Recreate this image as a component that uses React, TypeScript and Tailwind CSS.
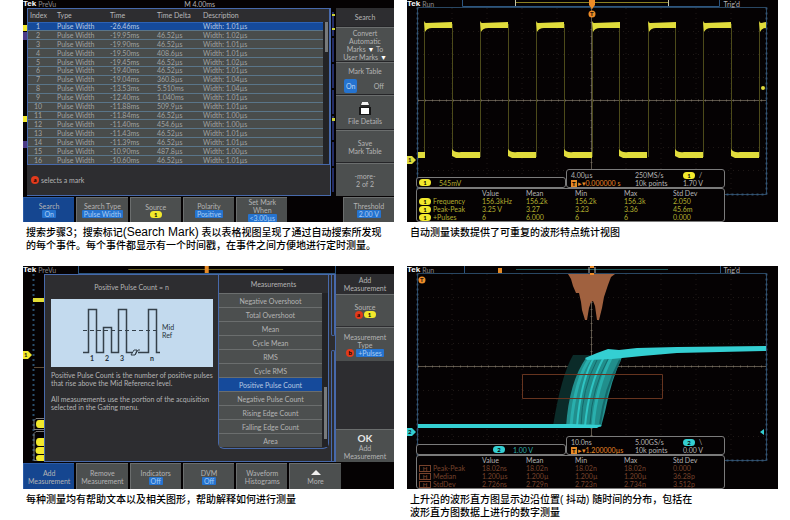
import { ReactNode } from 'react'
import { clsx } from 'clsx'

const marks = [
  ['1', '-26.46ms', '', '1.01µs'],
  ['2', '-19.95ms', '46.52µs', '1.02µs'],
  ['3', '-19.90ms', '46.52µs', '1.01µs'],
  ['4', '-19.50ms', '408.6µs', '1.01µs'],
  ['5', '-19.45ms', '46.52µs', '1.02µs'],
  ['6', '-19.40ms', '46.52µs', '1.01µs'],
  ['7', '-19.04ms', '360.8µs', '1.04µs'],
  ['8', '-13.53ms', '5.510ms', '1.04µs'],
  ['9', '-12.40ms', '1.040ms', '1.01µs'],
  ['10', '-11.88ms', '509.9µs', '1.01µs'],
  ['11', '-11.84ms', '46.52µs', '1.00µs'],
  ['12', '-11.40ms', '454.6µs', '1.00µs'],
  ['13', '-11.43ms', '46.52µs', '1.01µs'],
  ['14', '-11.39ms', '46.52µs', '1.01µs'],
  ['15', '-10.90ms', '487.8µs', '1.00µs'],
  ['16', '-10.60ms', '46.52µs', '1.01µs'],
]

const measurements = [
  'Negative Overshoot',
  'Total Overshoot',
  'Mean',
  'Cycle Mean',
  'RMS',
  'Cycle RMS',
  'Positive Pulse Count',
  'Negative Pulse Count',
  'Rising Edge Count',
  'Falling Edge Count',
  'Area',
]

const pulseStats = [
  ['Frequency', '156.3kHz', '156.2k', '156.2k', '156.3k', '2.050'],
  ['Peak-Peak', '3.25 V', '3.27', '3.23', '3.36', '45.6m'],
  ['+Pulses', '6', '6.000', '6', '6', '0.000'],
]

const jitterStats = [
  ['Peak-Peak', '18.02ns', '18.02n', '18.02n', '18.02n', '0.000'],
  ['Median', '1.200µs', '1.200µ', '1.200µ', '1.200µ', '36.28p'],
  ['StdDev', '2.726ns', '2.729n', '2.723n', '2.734n', '3.512p'],
]

function Figure({ caption, children }: { caption: ReactNode; children: ReactNode }) {
  return (
    <figure className="flex flex-col">
      {children}
      <figcaption className="px-[3px] pt-1 font-['Liberation_Sans','Noto_Sans_CJK_SC',sans-serif] text-[10px] leading-[13px] font-medium whitespace-nowrap text-black">
        {caption}
      </figcaption>
    </figure>
  )
}

function Screen({ className, children }: { className: string; children: ReactNode }) {
  return (
    <div className={clsx("overflow-hidden bg-[#050203] font-['Lato',sans-serif] text-[7px] leading-[8px] text-[#b4b4b4]", className)}>
      {children}
    </div>
  )
}

function Brand({ status }: { status: string }) {
  return (
    <span className="flex items-center gap-0.5 whitespace-nowrap">
      <b className="font-['Liberation_Sans',sans-serif] text-[8px] leading-[8px] text-white">Tek</b>
      <span className="text-[#8a8a8a]">{status}</span>
    </span>
  )
}

function Channel({ children, className }: { children: ReactNode; className: string }) {
  return (
    <span className={clsx('inline-block h-[7px] w-3 rounded-full text-center text-[6px] leading-[7px] font-bold text-black', className)}>
      {children}
    </span>
  )
}

function Knob({ children }: { children: ReactNode }) {
  return (
    <span className="inline-block size-2 rounded-full bg-[#e23a1c] text-center text-[6px] leading-[8px] font-bold text-black">
      {children}
    </span>
  )
}

function Value({ children }: { children: ReactNode }) {
  return <span className="rounded-[1px] bg-[#2573cf] px-0.5 leading-[8px] text-[#a9cdf5]">{children}</span>
}

function MenuButton({ active, children }: { active?: boolean; children: ReactNode }) {
  return (
    <button
      type="button"
      className={clsx(
        'flex h-full min-w-0 flex-col items-center justify-center border-t border-l whitespace-nowrap',
        active ? 'border-[#2d5ca5] bg-[#154690]' : 'border-[#6b6e6e] bg-[#4c4f4f]',
      )}
    >
      {children}
    </button>
  )
}

function SideButton({ className, children }: { className: string; children: ReactNode }) {
  return (
    <button
      type="button"
      className={clsx('flex w-full flex-col items-center justify-center border-t border-[#6b6e6e] bg-[#4c4f4f] whitespace-nowrap', className)}
    >
      {children}
    </button>
  )
}

function SearchScreen() {
  return (
    <Screen className="flex h-[222px] flex-col">
      <div className="flex h-[8px] items-center">
        <Brand status="PreVu" />
        <span className="ml-[128px]">M 4.00ms</span>
      </div>
      <div className="flex h-[188px]">
        <svg className="w-1 shrink-0" viewBox="0 0 4 188" preserveAspectRatio="none">
          <path d="M0 17h4v6H0zM0 108h4v6H0z" fill="#f2e92c" />
          <path d="M0 24h4v8H0zM0 133h4v7H0z" fill="#4b3a86" />
        </svg>
        <div className="flex min-w-0 flex-1 flex-col border-r border-b border-[#4769ab] bg-[#2d2d30]">
          <div className="flex h-[157px] border border-[#4769ab]">
            <table className="h-full flex-1 table-fixed border-collapse text-left text-[#a0a2a2]">
              <thead>
                <tr className="h-[13px] text-[#b9b9b9]">
                  <th className="w-[29px] p-0 pl-0.5 font-normal">Index</th>
                  <th className="w-[53px] p-0 font-normal">Type</th>
                  <th className="w-[47px] p-0 font-normal">Time</th>
                  <th className="w-[46px] p-0 font-normal">Time Delta</th>
                  <th className="p-0 font-normal">Description</th>
                </tr>
              </thead>
              <tbody className="leading-[7px]">
                {marks.map(([index, time, delta, width], i) => (
                  <tr key={index} className={clsx('border-t', i === 0 ? 'border-[#2d62b4] bg-[#154a9b] text-[#b7c9e2]' : 'border-[#5a7589] bg-[#494c4b]')}>
                    <td className="p-0 pr-[9px] text-center">{index}</td>
                    <td className="p-0">Pulse Width</td>
                    <td className="p-0">{time}</td>
                    <td className="p-0">{delta}</td>
                    <td className="p-0">Width: {width}</td>
                  </tr>
                ))}
              </tbody>
            </table>
            <div className="mt-[13px] w-[6px] bg-[#232326] pl-0.5">
              <div className="h-[30px] w-[3px] bg-[#777a7c]" />
            </div>
          </div>
          <p className="flex flex-1 items-center gap-0.5 pl-1">
            <Knob>a</Knob>
            selects a mark
          </p>
        </div>
        <svg className="w-[5px] shrink-0" viewBox="0 0 5 188" preserveAspectRatio="none">
          <path d="M2 4v180" stroke="#242d68" strokeWidth="2" strokeDasharray="24 2" />
          <path d="M1 6h3v2H1zM1 20h3v2H1zM1 110h3v3H1z" fill="#c9cf37" />
        </svg>
        <aside className="flex w-[58px] shrink-0 flex-col gap-px bg-[#252528]">
          <h2 className="flex h-[18px] items-center justify-center bg-[#2d2d30]">Search</h2>
          <SideButton className="h-[34px]">
            <span>Convert</span>
            <span>Automatic</span>
            <span>Marks <b className="text-white">▼</b> To</span>
            <span>User Marks <b className="text-white">▼</b></span>
          </SideButton>
          <div className="flex h-[32px] flex-col items-center justify-between border-t border-[#6b6e6e] bg-[#4c4f4f] pt-1 pb-px">
            <span>Mark Table</span>
            <div className="flex w-full justify-between px-2">
              <button type="button" className="h-[14px] rounded-[2px] bg-[#2573cf] px-0.5 text-[#b9d6f5]">On</button>
              <button type="button" className="pr-0.5">Off</button>
            </div>
          </div>
          <SideButton className="h-[34px]">
            <svg className="mb-0.5 h-[14px] w-3" viewBox="0 0 12 14">
              <path d="M2 1h8l1 5H1z" fill="#2a2a2a" />
              <path d="M3 1h6l1 3H2z" fill="#f2f2f2" />
              <path d="M0 6h12v8H0z" fill="#171717" />
              <path d="M2 7h8v6H2z" fill="#fff" />
            </svg>
            <span>File Details</span>
          </SideButton>
          <SideButton className="h-[32px]">
            <span>Save</span>
            <span>Mark Table</span>
          </SideButton>
          <SideButton className="h-[33px]">
            <span>-more-</span>
            <span>2 of 2</span>
          </SideButton>
        </aside>
      </div>
      <div className="mt-px grid flex-1 grid-cols-7 gap-x-0.5">
        <MenuButton active>
          Search<Value>On</Value>
        </MenuButton>
        <MenuButton>
          Search Type<Value>Pulse Width</Value>
        </MenuButton>
        <MenuButton>
          Source<Channel className="bg-[#f2e92c]">1</Channel>
        </MenuButton>
        <MenuButton>
          Polarity<Value>Positive</Value>
        </MenuButton>
        <MenuButton>
          <span>Set Mark</span>
          <span>When</span>
          <Value>&lt;3.00µs</Value>
        </MenuButton>
        <span />
        <MenuButton>
          Threshold<Value>2.00 V</Value>
        </MenuButton>
      </div>
    </Screen>
  )
}

function Graticule() {
  return (
    <>
      <g stroke="#3a302c" strokeDasharray="1 4" opacity=".5">
        {[45, 80, 115, 150, 219, 254, 289, 324].map((x) => (
          <path key={x} d={`M${x} 8V194`} />
        ))}
        {[31, 54, 77, 124, 147, 170].map((y) => (
          <path key={y} d={`M11 ${y}.5H359`} />
        ))}
      </g>
      <path d="M11 100.5H359M184.5 8V194" stroke="#5d554a" />
      <path d="M11 100.5H359M184.5 8V194" stroke="#7d7466" strokeWidth="2" strokeDasharray="1 6" opacity=".7" />
      <path d="M10.5 7.5H359.5V194.5H10.5z" fill="none" stroke="#294763" />
      <path d="M10.5 7.5V194.5M359.5 7.5V194.5H10.5" fill="none" stroke="#3a5b7a" strokeWidth="2" strokeDasharray="2 3" opacity=".8" />
    </>
  )
}

function PulseTrace() {
  const rises = [17, 73, 129, 185, 241, 296, 352]
  const lows = [45, 101, 157, 212, 268, 324]

  return (
    <svg className="col-start-1 row-start-1 w-full" viewBox="0 0 371 222">
      <path d="M55.5 0V6.500H312.500V0" fill="none" stroke="#2c5680" />
      <path d="M108 2.500H262" stroke="#8c8123" />
      <path d="M108.500 0V6M261.500 0V6" stroke="#c6c6a6" />
      <Graticule />
      <g stroke="#4c4a1a">
        {rises.map((x) => <path key={x} d={`M${x}.500 21V157`} />)}
        {lows.map((x) => <path key={x} d={`M${x}.500 24V152`} />)}
      </g>
      <g fill="#e0dc3c">
        {rises.map((x) => {
          const end = Math.min(x + 28, 359)
          return <path key={x} d={`M${x} 22 L${x + 2} 23 L${end} 22 V28 L${Math.min(x + 8, end)} 28 Q${x + 3} 28 ${x + 1} 32z`} />
        })}
        {lows.map((x) => (
          <path key={x} d={`M${x} 149 Q${x + 3} 153 ${x + 9} 152 H${x + 28} V158 H${x + 4} L${x} 156z`} />
        ))}
        <path d="M11 152h7v6h-7z" />
        <circle cx="356" cy="88" r="2" />
        <path d="M0 156H5L9 160L5 164H0z" />
      </g>
      <text x="1" y="162" fontSize="6" fontWeight="700" fill="#111">1</text>
      <path d="M182 0h6v5l-3 4-3-4z" fill="#ee8c27" />
      <circle cx="185" cy="14" r="3.500" fill="#ee8c27" />
      <text x="183" y="16" fontSize="6" fontWeight="700" fill="#25140a">T</text>
    </svg>
  )
}

function JitterTrace() {
  return (
    <svg className="col-start-1 row-start-1 w-full" viewBox="0 0 371 222">
      <path d="M57.500 0V7.500H313.500V0" fill="none" stroke="#2c5680" />
      <path d="M109 3.500H261" stroke="#1e5a5b" />
      <path d="M91 2h4v5h-4z" fill="#e58a26" />
      <Graticule />
      <path d="M161 8 L164 13 L166 20 L169 27 H172 L174 36 L175 44 L178 54 H180 L182 42 L184 36 L186 35 L188 40 L190 54 H192 L195 42 L197 31 L201 19 L204 11 L208 8z" fill="#a0613f" />
      <path d="M182 1v6M188 1v6" stroke="#b4b4b4" />
      <path d="M183 1h4M183 8h4" stroke="#ee8c27" strokeWidth="2" />
      <path d="M166 89 H182 L200 94 L178 160 H146 Q154 110 166 89z" fill="#0b2b29" />
      <path d="M179 92 L190 89 H216 Q204 114 198 146 L194 161 H159 Q162 116 179 92z" fill="#218e8c" />
      <g fill="none" stroke="#2fc4c3">
        <path d="M184 91Q168 112 164 160" strokeWidth="3" opacity=".6" />
        <path d="M188 90Q174 112 170 160" strokeWidth="2" />
        <path d="M197 91Q182 118 178 160" strokeWidth="2" />
        <path d="M204 92Q189 122 186 160" strokeWidth="3" opacity=".6" />
      </g>
      <g fill="none" stroke="#14696a">
        <path d="M190 94Q175 122 174 160" />
        <path d="M201 93Q185 122 183 158" />
        <path d="M213 94Q198 122 193 158" strokeWidth="2" />
      </g>
      <path d="M178 92 L190 87 L201 83 L212 84 L230 82 L270 81 L359 80 V85 L270 87 L235 90 L205 93 L180 94z" fill="#34cfd2" />
      <path d="M11 158H165L195 159L190 162H11z" fill="#34cfd2" />
      <path d="M115.500 108.500h140v24h-140z" fill="none" stroke="#66341f" />
      <circle cx="15" cy="14" r="3.500" fill="#ee8c27" />
      <text x="13" y="16" fontSize="6" fontWeight="700" fill="#25140a">T</text>
      <path d="M0 162H5L9 166L5 170H0zM353 166l4-3v6z" fill="#34cfd2" />
      <text x="1" y="168" fontSize="6" fontWeight="700" fill="#111">2</text>
    </svg>
  )
}

type ReadoutsProps = {
  channel: string
  scale: string
  stats: string[][]
  timebase: string
  rate: string
  delay: string
  level: string
  histogram?: boolean
}

function Readouts({ channel, scale, stats, timebase, rate, delay, level, histogram }: ReadoutsProps) {
  const badge = histogram ? 'bg-[#34cfd2]' : 'bg-[#f2e92c]'

  return (
    <div className="z-10 col-start-1 row-start-1 mr-[53px] ml-[9px] self-end">
      <div className="flex items-end">
        <div
          className={clsx(
            'flex h-[11px] flex-1 items-center gap-2 rounded-[3px] border border-[#7b7b7b] bg-[#050203]',
            histogram ? 'pl-[76px] text-[#2aa7a8]' : 'pl-0.5 text-[#b3af2f]',
          )}
        >
          <Channel className={badge}>{channel}</Channel>
          {scale}
        </div>
        <dl className="grid h-[19px] w-[159px] grid-cols-[64px_48px_1fr] rounded-[3px] border border-[#7b7b7b] bg-[#050203] pt-px pl-1 whitespace-nowrap">
          <dt>{timebase}</dt>
          <dt>{rate}</dt>
          <dt className="flex items-center gap-1">
            <Channel className={badge}>{channel}</Channel>
            {histogram ? '\\' : '/'}
          </dt>
          <dd className="text-[#e58a26]">
            <b className="mr-px bg-[#e58a26] px-px text-[6px] text-black">T</b>
            ▸▾{delay}
          </dd>
          <dd>10k points</dd>
          <dd>{level}</dd>
        </dl>
      </div>
      <div className="rounded-[3px] border border-[#7b7b7b] bg-[#050203]">
        <table className={clsx('w-full table-fixed border-collapse text-left', histogram ? 'text-[#77422c]' : 'text-[#b3af2f]')}>
          <thead>
            <tr className="text-[#b4b4b4]">
              <td className="w-[65px] p-0" />
              <th className="w-[44px] p-0 font-normal">Value</th>
              <th className="w-[49px] p-0 font-normal">Mean</th>
              <th className="w-[49px] p-0 font-normal">Min</th>
              <th className="w-[49px] p-0 font-normal">Max</th>
              <th className="p-0 font-normal">Std Dev</th>
            </tr>
          </thead>
          <tbody>
            {stats.map(([name, ...values]) => (
              <tr key={name}>
                <th className="p-0 font-normal whitespace-nowrap">
                  <span className="flex h-2 items-center gap-0.5 pl-0.5">
                    {histogram ? (
                      <span className="h-[7px] w-3 border border-current text-center text-[6px] leading-[5px] font-bold">H</span>
                    ) : (
                      <Channel className={badge}>{channel}</Channel>
                    )}
                    {name}
                  </span>
                </th>
                {values.map((value, i) => (
                  <td key={i} className="p-0">{value}</td>
                ))}
              </tr>
            ))}
          </tbody>
        </table>
      </div>
    </div>
  )
}

function ScopeHeader() {
  return (
    <div className="z-10 col-start-1 row-start-1 flex h-[8px] items-center justify-between self-start pr-[38px]">
      <Brand status="Run" />
      <span>Trig'd</span>
    </div>
  )
}

function PulseCountDrawing() {
  return (
    <svg className="h-[68px] w-[162px] bg-[#c3daee]" viewBox="0 0 162 68">
      <g fill="none" stroke="#34404a">
        <path d="M32 53.500H37.500V10.500H45.500V53.500H52.500V28.500H60.500V53.500H67.500V10.500H75.500V53.500H81M87 53.500H97.500V10.500H105.500V53.500H109" strokeWidth="1.500" />
        <path d="M80 56l3-5h3l-2 5zM84 56l3-5h2" />
        <path d="M32 31.500H106" strokeDasharray="4 3" />
      </g>
      <g fontSize="7" fill="#27323c">
        <text x="111" y="31">Mid</text>
        <text x="111" y="39">Ref</text>
        <g fontWeight="700" textAnchor="middle">
          <text x="41" y="62">1</text>
          <text x="56" y="62">2</text>
          <text x="71" y="62">3</text>
          <text x="101" y="62">n</text>
        </g>
      </g>
    </svg>
  )
}

function MeasurementScreen() {
  return (
    <Screen className="flex h-[223px] flex-col">
      <div className="flex h-[8px] items-center">
        <Brand status="PreVu" />
        <svg className="ml-[22px] h-[8px] min-w-0 flex-1" viewBox="0 0 314 8" preserveAspectRatio="xMinYMid slice">
          <path d="M.5 0V7.500H256V0" fill="none" stroke="#2c5680" />
          <path d="M50 3.500H204" stroke="#6b6122" />
          <path d="M126 0h4v7h-4z" fill="#e58a26" />
        </svg>
      </div>
      <div className="flex h-[188px]">
        <svg className="w-[21px] shrink-0" viewBox="0 0 21 188">
          <path d="M10.500 0V188" stroke="#2b4e6c" strokeWidth="2" strokeDasharray="2 3" />
          <path d="M10 24h11v4H10z" fill="#e2dd35" />
          <path d="M0 77h5l4 4-4 4H0z" fill="#f2e92c" />
          <text x="1" y="83" fontSize="6" fontWeight="700" fill="#111">1</text>
          <path d="M11 93.500h10" stroke="#5c4b37" />
          <path d="M21 144.500h-8l-2 2v9h10M21 157.500h-8l-2 2v27h10" fill="none" stroke="#7b7b7b" />
          <path d="M21 146h-5a3 4 0 0 0 0 8h5zM21 164h-5a3 4 0 0 0 0 8h5zM21 173h-5a3 3 0 0 0 0 7h5zM21 181h-5a3 3 0 0 0 0 6h5z" fill="#f2e92c" />
        </svg>
        <div className="flex min-w-0 flex-1 border border-[#4769ab] bg-[#2d2d30]">
          <div className="flex min-w-0 flex-1 flex-col items-center pt-2">
            <h2>Positive Pulse Count = n</h2>
            <div className="mt-2">
              <PulseCountDrawing />
            </div>
            <div className="w-full pt-1 pl-[6px] whitespace-nowrap">
              <p>
                Positive Pulse Count is the number of positive pulses
                <br />
                that rise above the Mid Reference level.
              </p>
              <p className="pt-2">
                All measurements use the portion of the acquisition
                <br />
                selected in the Gating menu.
              </p>
            </div>
          </div>
          <div className="flex h-[174px] w-[111px] shrink-0 flex-col rounded-b-md border-x border-b border-[#4769ab]">
            <h2 className="flex h-[18px] items-center justify-center">Measurements</h2>
            <div className="flex">
              <ul className="flex-1">
                {measurements.map((name) => (
                  <li key={name}>
                    <button
                      type="button"
                      className={clsx(
                        'block h-[14px] w-full border-t border-[#6b6e6e]',
                        name === 'Positive Pulse Count' ? 'bg-[#154a9b] text-[#b7c9e2]' : 'bg-[#4c4f4f]',
                      )}
                    >
                      {name}
                    </button>
                  </li>
                ))}
              </ul>
              <div className="w-[6px] bg-[#232326] pt-[94px] pl-0.5">
                <div className="h-[52px] w-[3px] bg-[#777a7c]" />
              </div>
            </div>
          </div>
          <div className="flex w-[6px] shrink-0 flex-col gap-[14px] pl-0.5">
            <div className="h-[61px] rounded-b-md border-x border-b border-[#4769ab]" />
            <div className="flex-1 rounded-t-md border-x border-t border-[#4769ab]" />
          </div>
        </div>
        <aside className="flex w-[58px] shrink-0 flex-col gap-px bg-[#2d2d30]">
          <h2 className="flex h-[19px] flex-col items-center justify-center">
            <span>Add</span>
            <span>Measurement</span>
          </h2>
          <SideButton className="h-[32px]">
            <span>Source</span>
            <span className="flex items-center gap-px">
              <Knob>a</Knob>
              <Channel className="bg-[#f2e92c]">1</Channel>
            </span>
          </SideButton>
          <SideButton className="h-[34px]">
            <span>Measurement</span>
            <span>Type</span>
            <span className="flex items-center gap-0.5">
              <Knob>b</Knob>
              <Value>+Pulses</Value>
            </span>
          </SideButton>
          <div className="flex-1" />
          <SideButton className="h-[33px]">
            <b className="text-[10px] leading-[12px] text-[#e6e6e6]">OK</b>
            <span>Add</span>
            <span>Measurement</span>
          </SideButton>
        </aside>
      </div>
      <div className="mt-px grid flex-1 grid-cols-7 gap-x-0.5">
        <MenuButton active>
          <span>Add</span>
          <span>Measurement</span>
        </MenuButton>
        <MenuButton>
          <span>Remove</span>
          <span>Measurement</span>
        </MenuButton>
        <MenuButton>
          Indicators<Value>Off</Value>
        </MenuButton>
        <MenuButton>
          DVM<Value>Off</Value>
        </MenuButton>
        <MenuButton>
          <span>Waveform</span>
          <span>Histograms</span>
        </MenuButton>
        <MenuButton>
          <svg className="h-2 w-3" viewBox="0 0 12 8">
            <path d="M1 6L6 1L11 6z" fill="#f0f0f0" />
          </svg>
          <span>More</span>
        </MenuButton>
      </div>
    </Screen>
  )
}

export default function App() {
  return (
    <main className="grid min-h-screen grid-cols-2 content-start gap-x-[13px] gap-y-[14px] bg-white pr-3 pl-[23px]">
      <Figure
        caption={
          <>
            搜索步骤<span className="text-xs leading-[13px]">3</span>；搜索标记
            <span className="text-xs leading-[13px]">(Search Mark)</span> 表以表格视图呈现了通过自动搜索所发现
            <br />
            的每个事件。每个事件都显示有一个时间戳，在事件之间方便地进行定时测量。
          </>
        }
      >
        <SearchScreen />
      </Figure>

      <Figure caption="自动测量读数提供了可重复的波形特点统计视图">
        <Screen className="grid h-[222px]">
          <PulseTrace />
          <ScopeHeader />
          <Readouts
            channel="1"
            scale="545mV"
            stats={pulseStats}
            timebase="4.00µs"
            rate="250MS/s"
            delay="0.000000 s"
            level="1.70 V"
          />
        </Screen>
      </Figure>

      <Figure caption="每种测量均有帮助文本以及相关图形，帮助解释如何进行测量">
        <MeasurementScreen />
      </Figure>

      <Figure
        caption={
          <>
            上升沿的波形直方图显示边沿位置( 抖动) 随时间的分布，包括在
            <br />
            波形直方图数据上进行的数字测量
          </>
        }
      >
        <Screen className="grid h-[223px]">
          <JitterTrace />
          <ScopeHeader />
          <Readouts
            channel="2"
            scale="1.00 V"
            stats={jitterStats}
            timebase="10.0ns"
            rate="5.00GS/s"
            delay="1.200000µs"
            level="0.00 V"
            histogram
          />
        </Screen>
      </Figure>
    </main>
  )
}
